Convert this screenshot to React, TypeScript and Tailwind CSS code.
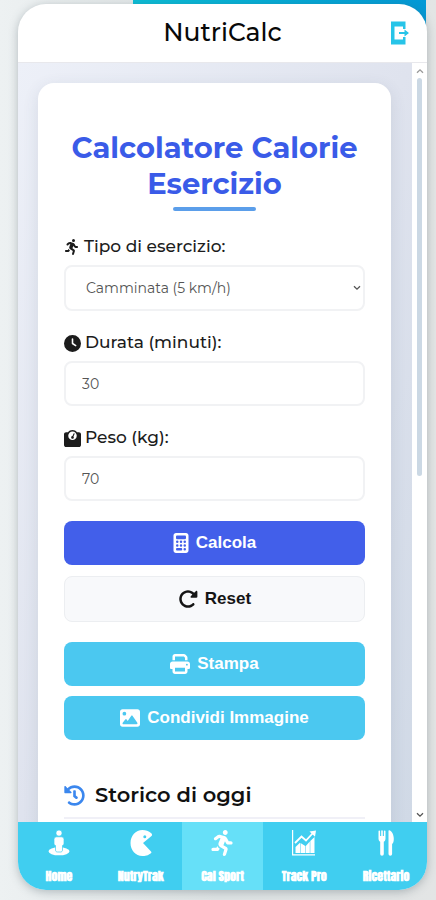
import { useState } from 'react'
import type { ReactNode } from 'react'
import { FaHistory, FaRunning } from 'react-icons/fa'
import {
  FaCalculator,
  FaClock,
  FaImage,
  FaPersonRunning,
  FaPrint,
  FaRotateRight,
  FaWeightScale,
} from 'react-icons/fa6'

const EXERCISES = ['Camminata (5 km/h)', 'Corsa (10 km/h)', 'Ciclismo', 'Nuoto']

const FIELD = 'w-full rounded-lg border-2 border-[#f1f2f4] bg-white text-[14px] text-[#555] outline-none'
const BUTTON = "flex w-full items-center justify-center gap-[7px] rounded-lg font-['Liberation_Sans',sans-serif] text-[17px] font-bold"

function ExitIcon() {
  return (
    <svg viewBox="0 0 20 24" className="h-6 w-5" fill="#27c4e8">
      <path d="M1 .5h14.500V8H13V5.500H4.500v13H13V16h2.500v7.500H1z" />
      <path d="M9 10.900h5.500V8.600L19 12l-4.500 3.400v-2.300H9z" />
    </svg>
  )
}

function PersonIcon() {
  return (
    <svg viewBox="0 0 22 26" className="h-[26px] w-[22px]" fill="currentColor">
      <ellipse cx="11" cy="21.300" rx="10.500" ry="4" />
      <path
        d="M11 0a3 3 0 0 1 0 6.200A3 3 0 0 1 11 0zM8.500 6.800h5A2.500 2.500 0 0 1 16 9.300v4c0 1.200-.6 2-1.500 2.300V20c0 1.300-.8 2-2 2h-3c-1.200 0-2-.7-2-2v-4.400C6.600 15.300 6 14.500 6 13.300v-4a2.500 2.500 0 0 1 2.500-2.500z"
        stroke="#40cef0"
        strokeWidth=".7"
      />
    </svg>
  )
}

function PacIcon() {
  return (
    <svg viewBox="0 0 24 26" className="h-[26px] w-6" fill="currentColor">
      <path
        fillRule="evenodd"
        d="M22.500 6 14 13l8 8.500c.6.700.5 1.300-.1 1.800A12 12 0 0 1 13.500 26C6.600 26 1.500 20.200 1.500 13S6.600 0 13.500 0c3.300 0 6 .8 8.800 3.300.9.800 1 1.900.2 2.700zM15.800 5.200a1.500 1.500 0 1 0 0 3 1.500 1.500 0 0 0 0-3z"
      />
    </svg>
  )
}

function ChartIcon() {
  return (
    <svg viewBox="0 0 26 26" className="size-[26px]" fill="currentColor">
      <path d="M1 0h1.200v24.300H24v1.200H1z" />
      <path d="M4.500 17 9 12.800V23H4.500zM9.500 13l4.800 3V23H9.500zM14.800 16 18.800 11.500V23h-4zM19.300 11l4.200-4v16h-4.200z" />
      <path d="M4 13 10.500 6.500l4.500 4 6.500-7" fill="none" stroke="currentColor" strokeWidth="1.800" />
      <path d="M18.500 1.500 25 .5l-1 6.300z" />
    </svg>
  )
}

function CutleryIcon() {
  return (
    <svg viewBox="0 0 18 26" className="h-[26px] w-[18px]" fill="currentColor">
      <path d="M1.500 1.200a.8.8 0 0 1 1.600 0V6h1.100V1a.8.8 0 0 1 1.600 0v5h1.100V1.200a.8.8 0 0 1 1.600 0V8.500c0 1.500-.6 2.600-1.700 3.300V24a1.800 1.800 0 0 1-3.600 0V11.800C2.100 11.100 1.500 10 1.500 8.500z" />
      <path d="M11.500.8c0-.5.4-.8.900-.6C15.200 1.300 16.800 5 16.800 9c0 2.500-.6 4.300-1.700 5V24a1.800 1.800 0 0 1-3.600 0z" />
    </svg>
  )
}

function Chevron({ className }: { className?: string }) {
  return (
    <svg viewBox="0 0 8 6" className={className} fill="none" stroke="currentColor" strokeWidth="1.300">
      <path d="M1 1.200 4 4.200 7 1.200" />
    </svg>
  )
}

function Field({ id, icon, label, children }: { id: string; icon: ReactNode; label: string; children: ReactNode }) {
  return (
    <div className="flex flex-col gap-1.5">
      <label htmlFor={id} className="flex h-6 items-center gap-1 text-[17px] font-medium text-[#1c1c1c]">
        {icon}
        {label}
      </label>
      {children}
    </div>
  )
}

const TABS = [
  { label: 'Home', icon: <PersonIcon /> },
  { label: 'NutryTrak', icon: <PacIcon /> },
  { label: 'Cal Sport', icon: <FaRunning className="size-[26px]" /> },
  { label: 'Track Pro', icon: <ChartIcon /> },
  { label: 'Ricettario', icon: <CutleryIcon /> },
]

export default function App() {
  const [exercise, setExercise] = useState(EXERCISES[0])
  const [minutes, setMinutes] = useState('30')
  const [weight, setWeight] = useState('70')
  const [tab, setTab] = useState('Cal Sport')

  function reset() {
    setExercise(EXERCISES[0])
    setMinutes('30')
    setWeight('70')
  }

  return (
    <div className="relative flex h-screen flex-col overflow-hidden bg-gradient-to-r from-[#edf1f2] via-[#dfe4e5] to-[#e3e5e5] pt-1 pr-[9px] pb-2.5 pl-[18px] font-[Montserrat,Inter,sans-serif]">
      {/* banner peeking out behind the phone */}
      <div className="absolute top-0 right-2.5 left-[133px] h-10 bg-gradient-to-r from-[#0bbdd6] to-[#0399d6]" />

      <div className="relative flex min-h-0 flex-1 flex-col overflow-hidden rounded-[28px] bg-white shadow-[0_2px_10px_rgba(70,85,95,0.35)]">
        <header className="relative flex h-[59px] shrink-0 items-center justify-center border-b border-[#e8e8ec]">
          <h1 className="text-[25px] font-medium text-[#080808]">NutriCalc</h1>
          <button aria-label="Esci" className="absolute right-[17px]">
            <ExitIcon />
          </button>
        </header>

        <div className="flex min-h-0 flex-1">
          <main className="min-w-0 flex-1 overflow-y-auto bg-gradient-to-br from-[#edf0f8] via-[#dfe3ee] to-[#d0d9e6] p-5 pr-[21px] [scrollbar-width:none]">
            <div className="rounded-2xl bg-white px-[26px] pt-[47px] pb-12 shadow-[0_4px_16px_rgba(60,70,100,0.12)]">
              <h2 className="text-center text-[29px] leading-9 font-bold text-[#3a5be8]">Calcolatore Calorie Esercizio</h2>
              <div className="mx-auto mt-[5px] mb-6 h-1 w-[83px] rounded-full bg-[#5b9eea]" />

              <div className="flex flex-col gap-5">
                <Field id="exercise" icon={<FaPersonRunning className="size-4" />} label="Tipo di esercizio:">
                  <div className="relative">
                    <select
                      id="exercise"
                      value={exercise}
                      onChange={e => setExercise(e.target.value)}
                      className={`${FIELD} block h-[46px] appearance-none pl-5`}
                    >
                      {EXERCISES.map(name => (
                        <option key={name}>{name}</option>
                      ))}
                    </select>
                    <Chevron className="pointer-events-none absolute top-5 right-1 h-1.5 w-2 text-[#555]" />
                  </div>
                </Field>
                <Field id="minutes" icon={<FaClock className="size-[17px]" />} label="Durata (minuti):">
                  <input
                    id="minutes"
                    value={minutes}
                    onChange={e => setMinutes(e.target.value)}
                    className={`${FIELD} h-[45px] px-4`}
                  />
                </Field>
                <Field id="weight" icon={<FaWeightScale className="size-[17px]" />} label="Peso (kg):">
                  <input
                    id="weight"
                    value={weight}
                    onChange={e => setWeight(e.target.value)}
                    className={`${FIELD} h-[45px] px-4`}
                  />
                </Field>
              </div>

              <div className="mt-5 flex flex-col gap-[11px]">
                <button className={`${BUTTON} h-11 bg-[#425fea] text-white`}>
                  <FaCalculator className="h-5 w-4" />
                  Calcola
                </button>
                <button onClick={reset} className={`${BUTTON} h-[46px] border border-[#eceef1] bg-[#f8f9fb] text-[#151515]`}>
                  <FaRotateRight className="size-5" />
                  Reset
                </button>
              </div>
              <div className="mt-5 flex flex-col gap-2.5">
                <button className={`${BUTTON} h-11 bg-[#4bc8f0] text-white`}>
                  <FaPrint className="size-5" />
                  Stampa
                </button>
                <button className={`${BUTTON} h-11 bg-[#4bc8f0] text-white`}>
                  <FaImage className="size-5" />
                  Condividi Immagine
                </button>
              </div>

              <h3 className="mt-[41px] flex items-center gap-2.5 border-b-2 border-[#f0f0f7] pb-2 text-[21px] leading-7 font-semibold text-[#111]">
                <FaHistory className="size-[21px] text-[#3b87ee]" />
                Storico di oggi
              </h3>
            </div>
          </main>

          <div className="flex w-[15px] shrink-0 flex-col items-center justify-between bg-white pt-[5px] pb-1">
            <Chevron className="h-1.5 w-2 rotate-180 text-[#999]" />
            <div className="mt-1 mb-auto h-[53%] w-[5px] rounded-full bg-[#cbd8e4]" />
            <Chevron className="h-1.5 w-2 text-[#555]" />
          </div>
        </div>

        <nav className="grid h-[68px] shrink-0 grid-cols-5 bg-[#40cef0] font-[Anton,'Liberation_Sans_Narrow',sans-serif] text-white">
          {TABS.map(t => (
            <button
              key={t.label}
              onClick={() => setTab(t.label)}
              className={`flex flex-col items-center justify-between pt-2 pb-1.5 ${tab === t.label ? 'bg-[#66e0f8]' : ''}`}
            >
              {t.icon}
              <span className="text-[12px] leading-4 font-bold">{t.label}</span>
            </button>
          ))}
        </nav>
      </div>
    </div>
  )
}
